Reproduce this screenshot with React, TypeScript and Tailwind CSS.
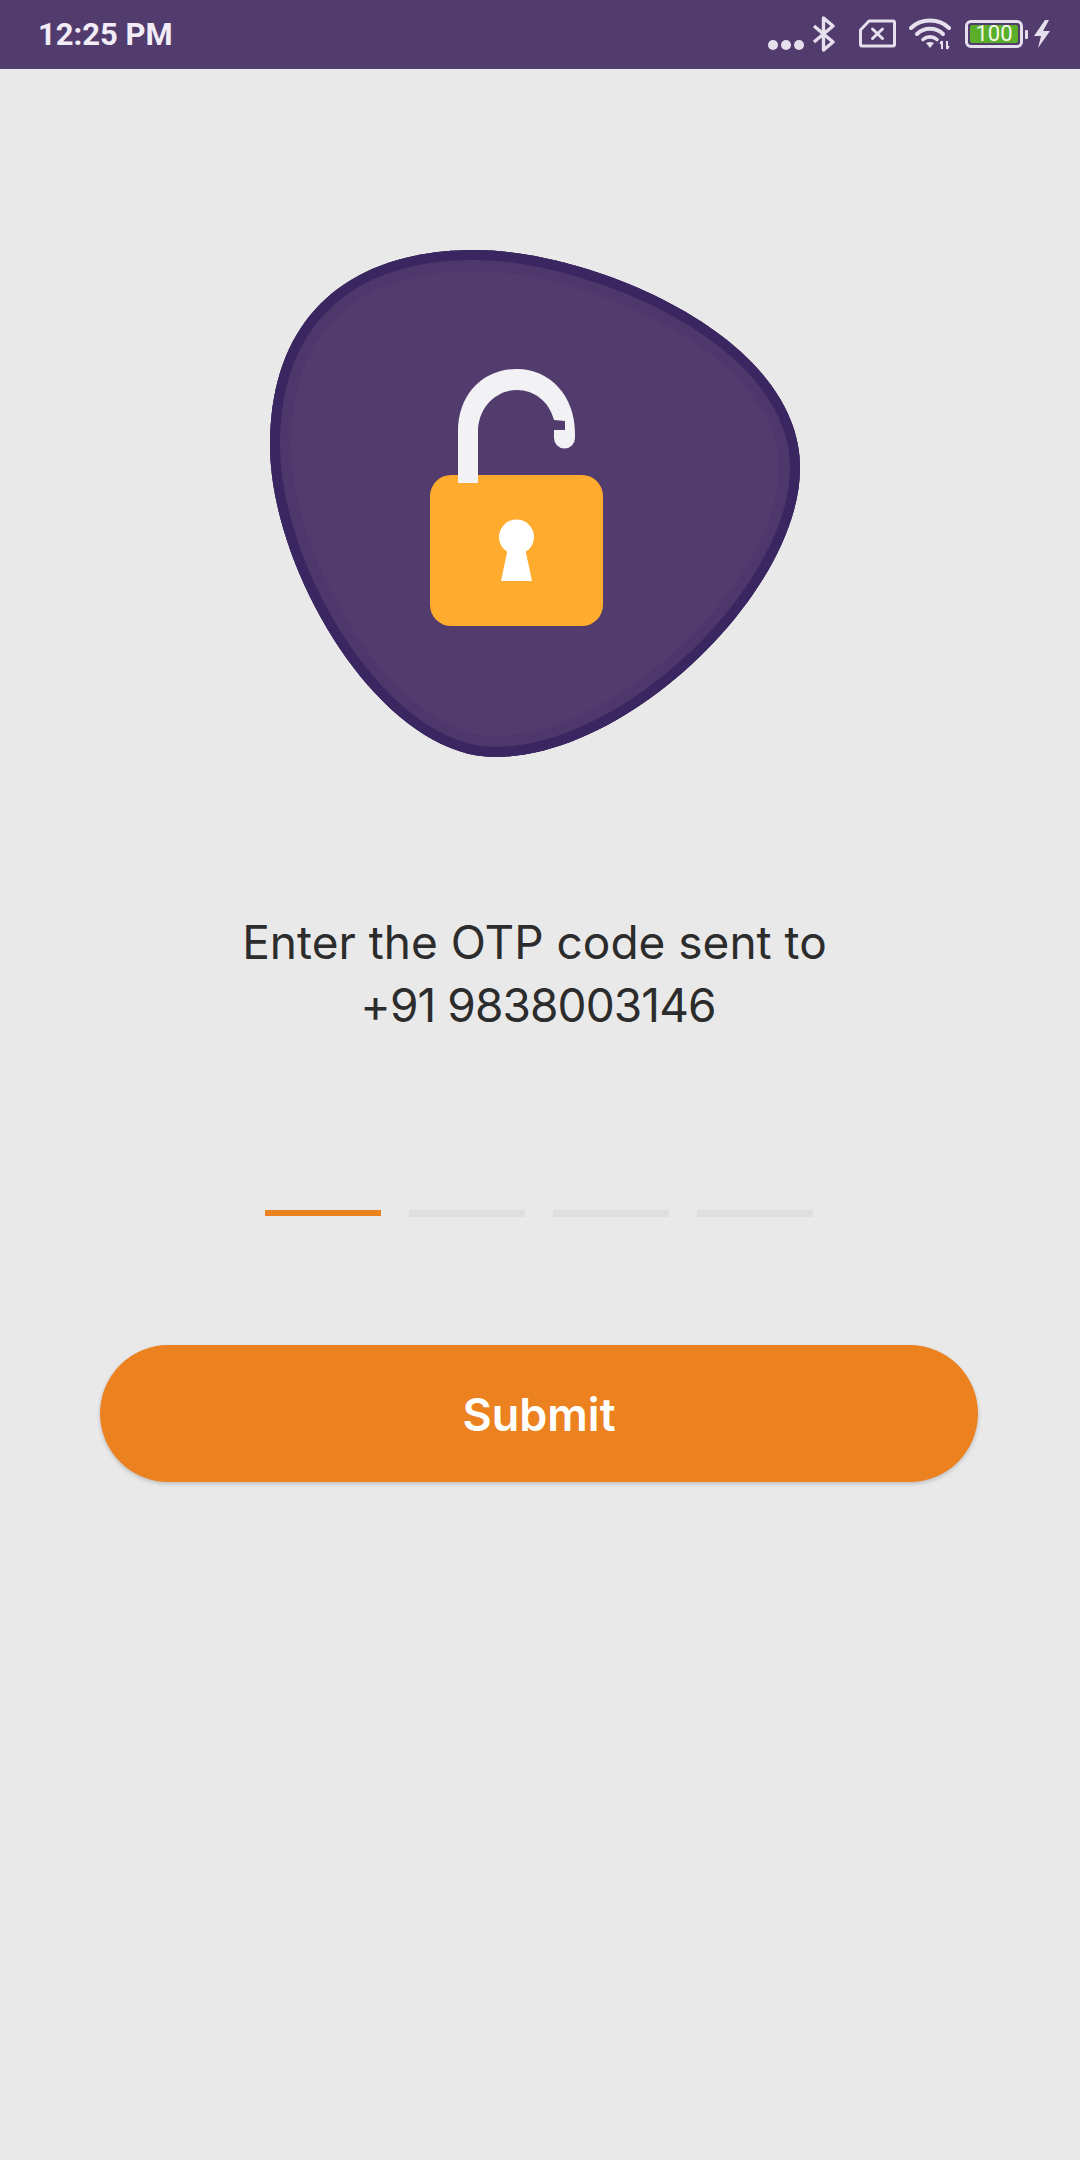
const blobPath = "M475 250C590 250 800 335 800 468C800 590 630 757 495 757C380 757 270 570 270 445C270 320 345 250 475 250Z";

function Illustration() {
  return (
    <svg className="block ml-[265px] mt-[176px]" width="540" height="520" viewBox="265 245 540 520">
      <defs>
        <clipPath id="blob"><path d={blobPath} /></clipPath>
      </defs>
      <path d={blobPath} fill="#523c6e" />
      <g clipPath="url(#blob)" fill="none">
        <path d={blobPath} stroke="#4e386b" strokeWidth="42" />
        <path d={blobPath} stroke="#3a2660" strokeWidth="20" />
      </g>
      <rect x="430" y="475" width="173" height="151" rx="21" fill="#ffab2e" />
      <path
        d="M458 483V432C458 394 483 369 517 369C550 369 575 396 575 433V438A10.500 10.500 0 0 1 554 438V430H565V421L554 420C549 401 534 390 517 390C495 390 478 408 478 432V483Z"
        fill="#f2f2f4"
      />
      <circle cx="516.500" cy="537" r="17.500" fill="#fff" />
      <path d="M508 548H525L532 581H501Z" fill="#fff" />
    </svg>
  );
}

function StatusIcons() {
  const c = "#e6dfee";
  return (
    <div className="flex items-center">
      <svg width="40" height="12" viewBox="0 0 40 12" className="mt-[20px]">
        <circle cx="6" cy="6" r="5" fill={c} />
        <circle cx="19" cy="6" r="5" fill={c} />
        <circle cx="32" cy="6" r="5" fill={c} />
      </svg>
      <svg width="24" height="36" viewBox="0 0 24 36" className="ml-[5px] -mt-[1px]">
        <path d="M2 10L21 26L11.500 34V2L21 10L2 26" fill="none" stroke={c} strokeWidth="3.400" strokeLinejoin="round" />
      </svg>
      <svg width="37" height="29" viewBox="0 0 37 29" className="ml-[23px] mt-[-2px]">
        <path d="M10 2H34A1.500 1.500 0 0 1 35.500 3.500V25.500A1.500 1.500 0 0 1 34 27H3A1.500 1.500 0 0 1 1.500 25.500V11Z" fill="none" stroke={c} strokeWidth="3" strokeLinejoin="round" />
        <path d="M13.500 10L23.500 19.500M23.500 10L13.500 19.500" stroke={c} strokeWidth="3" strokeLinecap="round" />
      </svg>
      <svg width="44" height="32" viewBox="0 0 44 32" className="ml-[13px] mt-[-1px]">
        <path d="M2 10C12 0 30 0 40 10" fill="none" stroke={c} strokeWidth="4" strokeLinecap="round" />
        <path d="M8 16C15 9 27 9 34 16" fill="none" stroke={c} strokeWidth="4" strokeLinecap="round" />
        <path d="M14 21.500C18 18 24 18 28 21.500" fill="none" stroke={c} strokeWidth="3.600" strokeLinecap="round" />
        <path d="M17 25C19.500 23.500 22.500 23.500 25 25L21 30Z" fill={c} />
        <path d="M33 23V31M33 23L31.200 26M38 23V31M38 31L39.800 28" fill="none" stroke={c} strokeWidth="2" />
      </svg>
      <div className="ml-[12px] mt-[-1px] flex items-center">
        <div className="flex h-[28px] w-[58px] items-center rounded-[6px] border-[3px] border-[#e6dfee] p-[2px]">
          <div className="flex h-full w-full items-center justify-center rounded-[2px] bg-[#5aae2a] font-['Roboto',sans-serif] text-[22px] leading-none text-[#f2f7ea]">
            100
          </div>
        </div>
        <div className="ml-[2px] h-[9px] w-[3px] rounded-[1px] bg-[#e6dfee]" />
      </div>
      <svg width="18" height="28" viewBox="0 0 18 28" className="ml-[5px] mt-[-1px]">
        <path d="M12 0L1 16H8L5 28L17 11H10L16 0Z" fill={c} />
      </svg>
    </div>
  );
}

export default function App() {
  return (
    <div className="flex min-h-[2160px] w-[1080px] flex-col bg-[#e9e9e9] font-['Inter',sans-serif]">
      <header className="flex h-[69px] items-center justify-between bg-[#523c6e] pl-[38px] pr-[29px]">
        <span className="font-['Roboto',sans-serif] text-[31px] font-bold leading-none text-[#f1ecf6]">12:25 PM</span>
        <StatusIcons />
      </header>
      <Illustration />
      <p className="mt-[146px] text-center text-[46px] font-normal leading-[63px] text-[#2c2c2c]">
        <span className="block pr-[11px]">Enter the OTP code sent to</span>
        <span className="block pr-[4px] tracking-[-0.9px]">+91 9838003146</span>
      </p>
      <div className="mt-[173px] mr-[2px] flex justify-center gap-[28px]">
        <div className="h-[6px] w-[116px] bg-[#ec8120]" />
        <div className="h-[7px] w-[116px] bg-[#dfdfdf]" />
        <div className="h-[7px] w-[116px] bg-[#dfdfdf]" />
        <div className="h-[7px] w-[116px] bg-[#dfdfdf]" />
      </div>
      <button className="ml-[100px] mt-[128px] flex h-[137px] w-[878px] items-center justify-center rounded-[69px] bg-[#ec8120] pt-[2px] text-[45px] font-semibold text-white shadow-[0_2px_4px_rgba(0,0,0,0.18)]">
        Submit
      </button>
    </div>
  );
}
